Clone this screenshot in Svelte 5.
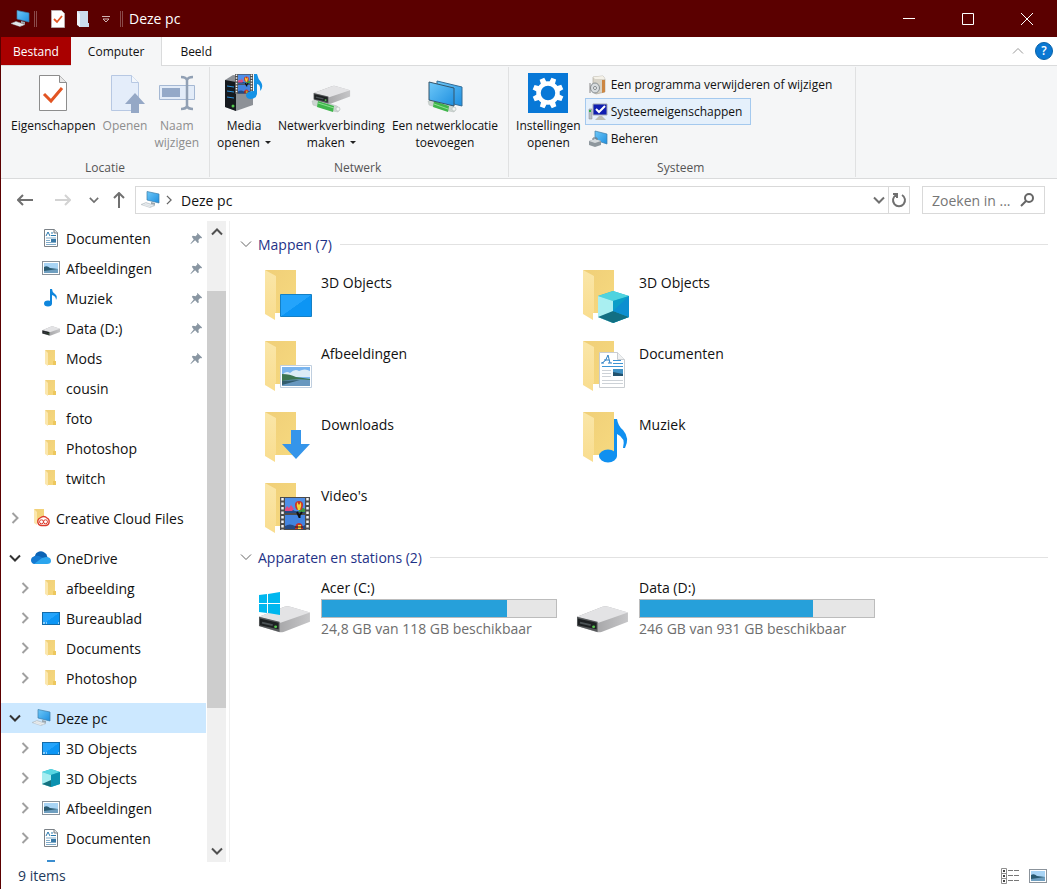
<script lang="ts">
  interface TreeItem {
    label: string;
    icon: string;
    level: number;
    pinned?: boolean;
    arrow?: 'open' | 'closed';
    selected?: boolean;
  }

  const sections: TreeItem[][] = [
    [
      { label: 'Documenten', icon: 'document', level: 1, pinned: true },
      { label: 'Afbeeldingen', icon: 'picture', level: 1, pinned: true },
      { label: 'Muziek', icon: 'music', level: 1, pinned: true },
      { label: 'Data (D:)', icon: 'drive', level: 1, pinned: true },
      { label: 'Mods', icon: 'folder', level: 1, pinned: true },
      { label: 'cousin', icon: 'folder', level: 1 },
      { label: 'foto', icon: 'folder', level: 1 },
      { label: 'Photoshop', icon: 'folder', level: 1 },
      { label: 'twitch', icon: 'folder', level: 1 }
    ],
    [{ label: 'Creative Cloud Files', icon: 'creative', level: 0, arrow: 'closed' }],
    [
      { label: 'OneDrive', icon: 'cloud', level: 0, arrow: 'open' },
      { label: 'afbeelding', icon: 'folder', level: 1, arrow: 'closed' },
      { label: 'Bureaublad', icon: 'desktop', level: 1, arrow: 'closed' },
      { label: 'Documents', icon: 'folder', level: 1, arrow: 'closed' },
      { label: 'Photoshop', icon: 'folder', level: 1, arrow: 'closed' }
    ],
    [
      { label: 'Deze pc', icon: 'pc', level: 0, arrow: 'open', selected: true },
      { label: '3D Objects', icon: 'desktop', level: 1, arrow: 'closed' },
      { label: '3D Objects', icon: 'cube', level: 1, arrow: 'closed' },
      { label: 'Afbeeldingen', icon: 'picture', level: 1, arrow: 'closed' },
      { label: 'Documenten', icon: 'document', level: 1, arrow: 'closed' }
    ]
  ];

  const folders = [
    { label: '3D Objects', overlay: 'desktop' },
    { label: '3D Objects', overlay: 'cube' },
    { label: 'Afbeeldingen', overlay: 'picture' },
    { label: 'Documenten', overlay: 'document' },
    { label: 'Downloads', overlay: 'download' },
    { label: 'Muziek', overlay: 'music' },
    { label: "Video's", overlay: 'video' }
  ];

  const drives = [
    { label: 'Acer (C:)', used: 79, info: '24,8 GB van 118 GB beschikbaar', system: true },
    { label: 'Data (D:)', used: 74, info: '246 GB van 931 GB beschikbaar', system: false }
  ];
</script>

{#snippet pc()}
  <svg class="i20" viewBox="0 0 20 20" aria-hidden="true">
    <path d="M7 1.500 19 4v9L7 10z" fill="url(#screen)" stroke="#3d7da8" stroke-width=".7" />
    <path d="m11 12 4 1v2l-4-1z" fill="#9aa6ae" />
    <path d="m1 14.500 5-2 9 3-5 2z" fill="#d7dde1" stroke="#a9b2b8" stroke-width=".5" />
    <path d="m3 14.500 7 2.300M5 13.500l8 2.500" stroke="#fff" stroke-width=".5" />
  </svg>
{/snippet}

{#snippet film()}
  <rect width="30" height="33" fill="#4c4c4c" />
  <path d="M2.500 1v32M27.500 1v32" stroke="#f4f4f4" stroke-width="2.500" stroke-dasharray="2.500 2" />
  <rect x="5" y="1" width="20" height="15" fill="#4f8fe8" />
  <rect x="5" y="18" width="20" height="14" fill="#4384e0" />
  <path d="M5 12q4-2 8 1t12-1v4H5zM5 29q5-3 10 0t10-1v4H5z" fill="#234a86" />
  <path d="m5 12 2-3 2 2 2-3 3 4-2 2H5z" fill="#e04a80" />
  <path d="M20 12q3-2 5 0v3h-7z" fill="#3f9a44" />
  <path d="M15 8a4 4 0 0 1 8 0q0 3-2 5h-4q-2-2-2-5z" fill="#c9302b" />
  <path d="M17 5q-1 4 1 8h2q2-4 1-8l-2 3z" fill="#f5d637" />
  <path d="m17 15 2 4 3-4M19.500 18v3" fill="none" stroke="#111" stroke-width="2" />
  <path d="M15 32q0-6 4-6t4 6z" fill="#c9302b" />
  <path d="M18 28h3v4h-3z" fill="#f5d637" />
  <path d="M15 30h8" stroke="#222" />
{/snippet}

{#snippet driveBody()}
  <path d="m1 14 26-12q3-1 6 0l20 7v11L26 32q-3 1-5 0L1 25z" fill="url(#metal)" />
  <path d="m1 14 26-12q3-1 6 0l20 7-30 12z" fill="#e3e3e5" />
  <path d="m1 14 21 6v12L1 25z" fill="#55585a" />
  <path d="m2 16 19 5v8L2 24z" fill="#1d2022" />
  <path d="m4 21 11 3" stroke="#4c5356" stroke-width="2" />
  <circle cx="18" cy="26" r="1.500" fill="#57c84d" />
{/snippet}

{#snippet treeIcon(name: string)}
  {#if name === 'pc'}
    {@render pc()}
  {:else}
    <svg class="i20" viewBox="0 0 20 20" aria-hidden="true">
      {#if name === 'folder'}
        <path d="M4 2h10v12h1v3H7z" fill="url(#back)" />
        <path d="m4 2 3 3v13l-3-2z" fill="#fbe7ae" />
        <path d="M12 13h3v4h-3z" fill="#edc75e" />
      {:else if name === 'creative'}
        <path d="M3 1h10v14H6z" fill="url(#back)" />
        <path d="m3 1 3 3v13l-3-2z" fill="#fbe7ae" />
        <path d="M10 17.500a4 4 0 0 1-1-7.500q4-3 7 0a4 4 0 0 1-1 7.500z" fill="#fff" stroke="#dc3b2c" stroke-width="1.300" />
        <circle cx="10.500" cy="13.800" r="2" fill="none" stroke="#dc3b2c" />
        <circle cx="14.500" cy="13.800" r="2" fill="none" stroke="#dc3b2c" />
      {:else if name === 'document'}
        <path d="M3.500 1.500h10l3 3v14h-13z" fill="#fff" stroke="#7b8187" />
        <path d="M13 1v4h4" fill="#dfe3e6" stroke="#7b8187" />
        <path d="m5 8 2-4 2 4M10 5h2M10 7.500h5" fill="none" stroke="#2878ad" />
        <path d="M5 10h10M5 12.500h4M5 14.500h10M5 16.500h10" stroke="#80abc9" />
        <path d="M10 11h5v3h-5z" fill="#3878a6" />
      {:else if name === 'picture'}
        <rect x="1.500" y="3.500" width="17" height="13" fill="#fff" stroke="#8b939b" />
        <path d="M3 5h14v10H3z" fill="#a8d4f5" />
        <path d="M3 9q3-2 6 1l8 1v4H3z" fill="#2a5a71" />
        <path d="m3 13 14-2v4H3z" fill="#6f9fc0" />
      {:else if name === 'music'}
        <ellipse cx="7" cy="15.500" rx="4" ry="3" fill="#0f86dc" />
        <path d="M9 1h2q0 3 3 5t1 6q0-4-4-5v9H9z" fill="#0f86dc" />
      {:else if name === 'drive'}
        <g transform="translate(1 8) scale(.34 .3)">{@render driveBody()}</g>
      {:else if name === 'cloud'}
        <path d="M4 15a4 4 0 0 1 0-7 6 6 0 0 1 10-3q2 1 2 3l3 7z" fill="#0b63b5" />
        <path d="M3 16q-3-1-3-4t4-4q3-1 6 1l4 2-8 5z" fill="#1479d1" />
        <path d="m3 16 8-6 4-1q5 0 5 4 0 3-4 3z" fill="#2ba5ee" />
      {:else if name === 'desktop'}
        <rect x="1.500" y="4.500" width="17" height="12" fill="url(#blue)" stroke="#126ba9" />
        <path d="M2 15h2m1 0h1m11 0h1" stroke="#fff" />
      {:else if name === 'cube'}
        <path d="m10 1 9 3v12l-9 3-9-3V4z" fill="#25aebd" />
        <path d="m1 4 9-3 9 3-9 3z" fill="#57d6e2" />
        <path d="m1 4 9 3v12l-9-3z" fill="#a5edf1" />
        <path d="m10 7 9-3v12l-9 3z" fill="#0b91b0" />
        <path d="m1 16 9-4v7z" fill="#14717f" />
      {/if}
    </svg>
  {/if}
{/snippet}

{#snippet chevron(dir: string)}
  <svg class="chevron {dir}" viewBox="0 0 12 12" aria-hidden="true">
    <path d="m1 3.500 5 5 5-5" />
  </svg>
{/snippet}

<svg class="defs" aria-hidden="true">
  <defs>
    <linearGradient id="screen" x2="1" y2="1">
      <stop offset="0" stop-color="#6ec8f8" />
      <stop offset="1" stop-color="#1e8fe0" />
    </linearGradient>
    <linearGradient id="blue" x2="1" y2="1">
      <stop offset=".5" stop-color="#24a4fb" />
      <stop offset=".51" stop-color="#0c95f4" />
    </linearGradient>
    <linearGradient id="back" x2="1" y2="1">
      <stop offset="0" stop-color="#f0cf78" />
      <stop offset="1" stop-color="#f6d97f" />
    </linearGradient>
    <linearGradient id="flap" y2="1" x2="0">
      <stop offset="0" stop-color="#fae6a8" />
      <stop offset="1" stop-color="#f9dd8f" />
    </linearGradient>
    <linearGradient id="metal" x2="1">
      <stop offset=".4" stop-color="#a8a8aa" />
      <stop offset="1" stop-color="#c6c6c8" />
    </linearGradient>
  </defs>
</svg>

<div class="window">
  <header class="titlebar">
    {@render pc()}
    <span class="separator"></span>
    <div class="quick-access">
      <button aria-label="Eigenschappen">
        <svg width="16" height="20" viewBox="0 0 16 20">
          <path d="M1.500 1.500h10l3 3v14h-13z" fill="#fff" stroke="#b9a8a8" />
          <path d="m4 10 3 3 5-6" fill="none" stroke="#e25422" stroke-width="1.800" />
        </svg>
      </button>
      <button aria-label="Nieuwe map">
        <svg width="16" height="20" viewBox="0 0 16 20">
          <path d="M2 2h11v12h1v4H4z" fill="#ccdcec" />
          <path d="m2 2 3 3v13l-3-2z" fill="#eef5fc" />
        </svg>
      </button>
      <button class="customize" aria-label="Werkbalk aanpassen">
        <svg width="8" height="8" viewBox="0 0 8 8">
          <path d="M0 1.500h8M1 4l3 3 3-3z" fill="none" stroke="#d0b4b4" />
        </svg>
      </button>
    </div>
    <span class="separator"></span>
    <h1>Deze pc</h1>
    <div class="caption-buttons">
      <button aria-label="Minimaliseren">
        <svg width="12" height="12" viewBox="0 0 12 12"><path d="M0 5.500h12" /></svg>
      </button>
      <button aria-label="Maximaliseren">
        <svg width="12" height="12" viewBox="0 0 12 12"><path d="M.5.5h11v11H.5z" /></svg>
      </button>
      <button aria-label="Sluiten">
        <svg width="12" height="12" viewBox="0 0 12 12"><path d="m0 0 12 12M12 0 0 12" /></svg>
      </button>
    </div>
  </header>

  <nav class="tabs">
    <button class="tab file">Bestand</button>
    <button class="tab active">Computer</button>
    <button class="tab">Beeld</button>
    <div class="tab-tools">
      <button class="plain light" aria-label="Lint minimaliseren">{@render chevron('up')}</button>
      <button class="help" aria-label="Help">?</button>
    </div>
  </nav>

  <section class="ribbon">
    <div class="group">
      <div class="group-items">
        <button class="big">
          <svg width="40" height="40" viewBox="0 0 40 40">
            <path d="M6.500 2.500h20l7 7v28h-27z" fill="#fff" stroke="#8d8d8d" />
            <path d="M26.500 2.500v7h7" fill="#e8e8e8" stroke="#8d8d8d" />
            <path d="m11 21 7 7 11-13" fill="none" stroke="#e25422" stroke-width="3" />
          </svg>
          <span>Eigenschappen</span>
        </button>
        <button class="big" disabled>
          <svg width="40" height="40" viewBox="0 0 40 40">
            <path d="M6.500 2.500h20l7 7v28h-27z" fill="#e4edfa" stroke="#b7c8e3" />
            <path d="M26.500 2.500v7h7" fill="#f3f7fc" stroke="#b7c8e3" />
            <path d="m30 20 10 11h-6v9h-8v-9h-6z" fill="#95a8c6" />
          </svg>
          <span>Openen</span>
        </button>
        <button class="big" disabled>
          <svg width="40" height="40" viewBox="0 0 40 40">
            <path d="M2.500 12.500h35v14h-35z" fill="#e3ecf8" stroke="#a5b8d3" />
            <path d="M5 15h18v9H5z" fill="#94a9c8" />
            <path d="M24 4q5 0 6 3 1-3 6-3M30 6v28m-6 2q5 0 6-3 1 3 6 3" fill="none" stroke="#91a0b4" stroke-width="2.500" />
          </svg>
          <span>Naam<br />wijzigen</span>
        </button>
      </div>
      <h2>Locatie</h2>
    </div>

    <div class="group">
      <div class="group-items">
        <button class="big">
          <svg width="40" height="40" viewBox="0 0 40 40">
            <path d="m1 7 8-5 20 2v28l-17 6L1 34z" fill="#8d9197" />
            <path d="m1 7 11 2v29L1 34z" fill="#15191e" />
            <path d="m3 13 7 1m-7 4 7 1m-7 5 7 1" stroke="#2b91dc" />
            <circle cx="9" cy="33" r="1.500" fill="#53c84b" />
            <g transform="translate(11 1) scale(.6)">{@render film()}</g>
            <path d="M30 1h3q1 5 4 8 3 5-1 9 1-6-3-7v10q-1 5-6 5t-5-4q1-4 8-4z" fill="#1492e6" />
          </svg>
          <span>Media<br />openen <i class="caret"></i></span>
        </button>
        <button class="big">
          <svg width="40" height="40" viewBox="0 0 40 40">
            <path d="m1 28 5-1 20 6 3 3-2 3-5-1-20-6z" fill="#ccd5d1" stroke="#b2bbb8" stroke-width=".5" />
            <path d="m7 28 16 5-1 6-16-5z" fill="#3fb64b" />
            <path d="m7 30 16 5" stroke="#8edf91" />
            <circle cx="27" cy="36" r="2" fill="#f1f5f3" stroke="#aab3b0" stroke-width=".5" />
            <g transform="translate(2 12) scale(.7 .58)">{@render driveBody()}</g>
          </svg>
          <span>Netwerkverbinding<br />maken <i class="caret"></i></span>
        </button>
        <button class="big">
          <svg width="40" height="40" viewBox="0 0 40 40">
            <path d="m12 8 25 6v19l-25-6z" fill="url(#screen)" stroke="#356d96" />
            <path d="m3 28 5-1 20 6 3 3-2 3-5-1-20-6z" fill="#ccd5d1" stroke="#b2bbb8" stroke-width=".5" />
            <path d="m9 28 15 5-1 6-15-5z" fill="#3fb64b" />
            <path d="m9 31 14 5" stroke="#8edf91" />
            <circle cx="29" cy="36" r="2" fill="#f1f5f3" stroke="#aab3b0" stroke-width=".5" />
            <path d="m4 9 25 6v18L4 27z" fill="url(#screen)" stroke="#34546a" />
          </svg>
          <span>Een netwerklocatie<br />toevoegen</span>
        </button>
      </div>
      <h2>Netwerk</h2>
    </div>

    <div class="group">
      <div class="group-items">
        <button class="big">
          <svg width="40" height="40" viewBox="0 0 40 40">
            <path d="M0 0h40v40H0z" fill="#0878d7" />
            <circle cx="20" cy="20" r="9.500" fill="none" stroke="#fff" stroke-width="4.500" />
            {#each [22, 67, 112, 157, 202, 247, 292, 337] as angle}
              <path d="M17.500 4.500h5l.5 5h-6z" fill="#fff" transform="rotate({angle} 20 20)" />
            {/each}
          </svg>
          <span>Instellingen<br />openen</span>
        </button>
        <div class="small-list">
          <button class="small">
            <svg class="i20" viewBox="0 0 20 20">
              <path d="m5 2 10-1 2 3v13l-9 2-3-2z" fill="#d7d3c8" stroke="#aaa597" stroke-width=".6" />
              <path d="m5 2 10-1 2 3H7z" fill="#f4f1e8" />
              <path d="M14 5h3v12l-3 1z" fill="#cc8642" />
              <ellipse cx="7" cy="13" rx="4.500" ry="5" fill="#d8dcde" stroke="#868d91" />
              <circle cx="7" cy="13" r="1.500" fill="#fff" stroke="#7f868a" />
              <path d="M2 8v10" stroke="#888" />
            </svg>
            Een programma verwijderen of wijzigen
          </button>
          <button class="small hover">
            <svg class="i20" viewBox="0 0 20 20">
              <path d="M1 7h3v10H1z" fill="#b9bfc3" stroke="#858b90" stroke-width=".5" />
              <path d="M1 8h2v2H1z" fill="#2fb344" />
              <path d="M5 2h14v11H5z" fill="#0f1eb1" stroke="#a7abb0" />
              <path d="m8 7 3 3 6-6" fill="none" stroke="#fff" stroke-width="2" />
              <path d="m11 14-4 4h11l-4-4z" fill="#bdbdb4" />
            </svg>
            Systeemeigenschappen
          </button>
          <button class="small">
            <svg class="i20" viewBox="0 0 20 20">
              <path d="m7 2 12 3v10L7 11z" fill="url(#screen)" stroke="#3d7da8" stroke-width=".7" />
              <path d="m1 12 6-2 6 2v4l-6 2-6-2z" fill="#8e979d" />
              <path d="m1 12 6-2 6 2-6 2z" fill="#d5dadd" />
              <path d="M5 11V9h4v2" fill="none" stroke="#707980" />
            </svg>
            Beheren
          </button>
        </div>
      </div>
      <h2>Systeem</h2>
    </div>
  </section>

  <div class="address-row">
    <button class="plain" aria-label="Vorige">
      <svg width="16" height="14" viewBox="0 0 16 14"><path d="M1 7h15M6 2 1 7l5 5" /></svg>
    </button>
    <button class="plain forward" aria-label="Volgende">
      <svg width="16" height="14" viewBox="0 0 16 14"><path d="M0 7h15M10 2l5 5-5 5" /></svg>
    </button>
    <button class="plain recent" aria-label="Recente locaties">{@render chevron('down')}</button>
    <button class="plain parent" aria-label="Omhoog">
      <svg width="14" height="16" viewBox="0 0 14 16"><path d="M7 1v15M2 6l5-5 5 5" /></svg>
    </button>
    <div class="address">
      {@render pc()}
      <span class="crumb-arrow">{@render chevron('right')}</span>
      <a href="#pc">Deze pc</a>
      <button class="plain" aria-label="Vorige locaties">{@render chevron('down')}</button>
      <button class="plain refresh" aria-label="Vernieuwen">
        <svg width="16" height="16" viewBox="0 0 16 16">
          <path d="M11 3a6 6 0 1 1-6 0M2 2h4v4" />
        </svg>
      </button>
    </div>
    <label class="search">
      <input type="text" placeholder="Zoeken in ..." aria-label="Zoeken in Deze pc" />
      <svg width="16" height="16" viewBox="0 0 16 16" aria-hidden="true">
        <circle cx="10" cy="6" r="4" /><path d="m7 9-5 5" />
      </svg>
    </label>
  </div>

  <div class="body">
    <aside class="sidebar">
      <div class="tree">
        {#each sections as section}
          <ul>
            {#each section as item}
              <li>
                <a href="#item" class="level{item.level}" class:selected={item.selected}>
                  <span class="toggle {item.arrow ?? ''}">
                    {#if item.arrow}
                      {@render chevron(item.arrow === 'open' ? 'down' : 'right')}
                    {/if}
                  </span>
                  {@render treeIcon(item.icon)}
                  <span class="name">{item.label}</span>
                  {#if item.pinned}
                    <svg class="pin" viewBox="0 0 14 14" aria-hidden="true">
                      <path d="m8 1 5 5-1 1-1-.5-2 2 .5 2.500-1 1-3-3L1 13l-.5-.5L4 8 2 5l1-1 3 .5 2-2L7.500 2z" />
                    </svg>
                  {/if}
                </a>
              </li>
            {/each}
          </ul>
        {/each}
        <span class="next-item"></span>
      </div>
      <div class="scrollbar">
        <button class="plain" aria-label="Omhoog schuiven">{@render chevron('up')}</button>
        <div class="track"><div class="thumb"></div></div>
        <button class="plain" aria-label="Omlaag schuiven">{@render chevron('down')}</button>
      </div>
    </aside>

    <main>
      <h2 class="heading">{@render chevron('down')}Mappen (7)</h2>
      <div class="tiles folders">
        {#each folders as folder}
          <a href="#folder" class="tile">
            <svg width="64" height="56" viewBox="0 0 64 56" aria-hidden="true">
              <path d="M12 2h31v43H22z" fill="url(#back)" />
              <path d="m12 2 11 6v36l-1 1v7l-10-6z" fill="url(#flap)" />
              {#if folder.overlay === 'desktop'}
                <path d="M27.500 26.500h31v22h-31z" fill="url(#blue)" stroke="#1580c5" />
              {:else if folder.overlay === 'cube'}
                <g transform="translate(-3 0)">
                  <path d="m30 28 15-5 16 5v21l-16 6-15-6z" fill="#29b8cb" />
                  <path d="m30 28 15-5 16 5-16 5z" fill="#4fd3df" />
                  <path d="m30 28 15 5v22l-15-6z" fill="#a9eff1" />
                  <path d="m45 33 16-5v21l-16 6z" fill="#0b9ec8" />
                  <path d="m30 49 15-6v12zM45 43l16 6-16 6z" fill="#126f82" />
                  <path d="m45 43 16-15v21z" fill="#0d8fd0" />
                </g>
              {:else if folder.overlay === 'picture'}
                <path d="M27.500 26.500h31v22h-31z" fill="#fff" stroke="#c0cfdf" />
                <path d="M29 28h28v19H29z" fill="#79b4ee" />
                <path d="M29 36q4-5 8-2 5-5 9-2 6-3 11 0v6H29z" fill="#dcebf6" />
                <path d="M29 35q8 0 14 3l14 2v2l-28 1z" fill="#3d7551" />
                <path d="M29 42q14-3 28-1v6H29z" fill="#6797bf" />
                <path d="m29 42 18-1-18 5z" fill="#315c6d" />
              {:else if folder.overlay === 'document'}
                <path d="M28.500 13.500h18l7 7v28h-25z" fill="#fff" stroke="#c9cdd1" />
                <path d="M46.500 13.500v7h7" fill="#f0f1f2" stroke="#c9cdd1" />
                <path d="M31 24q4-1 6-8l2 8m-6-3h5m-8 3h3m4 0h4" fill="none" stroke="#2b7fc4" />
                <path d="M42 21.500h8M42 24.500h10M31 27.500h21" stroke="#3c94d4" />
                <path d="M31 31.500h9m-9 3h9m-9 3h9m-9 4h21m-21 3h21" stroke="#cdd2d7" />
                <path d="M42 30h10v7H42z" fill="#4192c4" />
                <path d="m42 33 10 2v2H42z" fill="#24536e" />
              {:else if folder.overlay === 'download'}
                <path d="M38 20h10v14h9L43 49 29 34h9z" fill="#3595ea" />
              {:else if folder.overlay === 'music'}
                <ellipse cx="37" cy="46" rx="9" ry="6.500" fill="#1090f0" />
                <path d="M43 9h3q1 7 6 11 7 8 2 18h-2q3-10-6-14v22h-3z" fill="#1090f0" />
              {:else if folder.overlay === 'video'}
                <g transform="translate(27 16)">{@render film()}</g>
              {/if}
            </svg>
            <span class="name">{folder.label}</span>
          </a>
        {/each}
      </div>

      <h2 class="heading">{@render chevron('down')}Apparaten en stations (2)</h2>
      <div class="tiles drives">
        {#each drives as drive}
          <a href="#drive" class="tile">
            <svg width="64" height="64" viewBox="0 0 64 64" aria-hidden="true">
              <g transform="translate(5 29) scale(.98 .84)">{@render driveBody()}</g>
              {#if drive.system}
                <path d="m6 19 8-1v9H6zm9-1 12-2v11H15zM6 28h8v9l-8-1zm9 0h12v11l-12-2z" fill="#00b7ef" />
              {/if}
            </svg>
            <div class="drive-info">
              <span class="name">{drive.label}</span>
              <div class="usage"><div style="width: {drive.used}%"></div></div>
              <span class="free">{drive.info}</span>
            </div>
          </a>
        {/each}
      </div>
    </main>
  </div>

  <footer class="status">
    <span>9 items</span>
    <div class="views">
      <button aria-label="Details">
        <svg width="20" height="16" viewBox="0 0 20 16">
          <path d="M1.500.5h5v15h-5zM1.500 5.500h5m-5 5h5" fill="#fff" stroke="#8e8e8e" />
          <path d="M3 3h2M3 8h2M3 13h2" stroke="#444" stroke-width="2" />
          <path d="M8 2.500h5m1 0h5m-11 5h5m1 0h5m-11 5h5m1 0h5" stroke="#777" />
        </svg>
      </button>
      <button aria-label="Grote pictogrammen">{@render treeIcon('picture')}</button>
    </div>
  </footer>
</div>

<style>
  :global(body) {
    background: #fff;
  }

  .window {
    display: flex;
    flex-direction: column;
    box-sizing: border-box;
    height: 100vh;
    border-left: 1px solid #5b0000;
    background: #fff;
    color: #111;
    font-family: 'Open Sans', 'Noto Sans', sans-serif;
    font-size: 14px;
  }

  .defs {
    position: absolute;
    width: 0;
    height: 0;
  }

  button,
  input {
    padding: 0;
    border: 0;
    background: none;
    color: inherit;
    font: inherit;
  }

  a {
    color: inherit;
    text-decoration: none;
  }

  h1,
  h2 {
    margin: 0;
    font-weight: 400;
  }

  svg {
    display: block;
    flex: none;
  }

  .i20 {
    width: 20px;
    height: 20px;
  }

  .chevron {
    width: 12px;
    height: 12px;
    fill: none;
    stroke: #666;
    stroke-width: 1.5;
  }

  .chevron.up {
    transform: rotate(180deg);
  }

  .chevron.right {
    transform: rotate(-90deg);
  }

  .plain {
    display: grid;
    place-items: center;
    color: #707070;
  }

  .plain svg {
    fill: none;
    stroke: currentColor;
    stroke-width: 2;
  }

  .plain.light .chevron {
    color: #999;
    stroke-width: 1;
  }

  /* Title bar */
  .titlebar {
    display: flex;
    flex: none;
    align-items: center;
    height: 37px;
    padding-left: 9px;
    background: #5b0000;
    color: #fff;
  }

  .titlebar h1 {
    font-size: 14px;
  }

  .separator {
    width: 1px;
    height: 16px;
    margin: 0 6px 0 4px;
    border: 1px solid #8a4a4a;
    border-width: 0 1px;
  }

  .quick-access {
    display: flex;
    margin-left: 2px;
  }

  .quick-access button {
    display: grid;
    place-items: center;
    width: 25px;
    height: 24px;
  }

  .quick-access .customize {
    width: 21px;
  }

  .caption-buttons {
    display: flex;
    align-self: stretch;
    margin-left: auto;
    padding-right: 1px;
  }

  .caption-buttons button {
    display: grid;
    place-items: center;
    width: 59px;
  }

  .caption-buttons path {
    fill: none;
    stroke: #fff;
  }

  /* Tabs */
  .tabs {
    display: flex;
    flex: none;
    height: 28px;
    font-size: 12px;
  }

  .tab {
    padding: 0 18px;
  }

  .tab.file {
    padding: 0 12px;
    background: #a90000;
    color: #fff;
  }

  .tab.active {
    z-index: 1;
    margin-bottom: -1px;
    padding: 0 17px 1px;
    border-right: 1px solid #dadbdc;
    background: #f5f6f7;
  }

  .tab-tools {
    display: flex;
    align-items: center;
    gap: 11px;
    margin-left: auto;
    padding-right: 4px;
  }

  .help {
    width: 18px;
    height: 18px;
    border: 1px solid #0862a8;
    border-radius: 50%;
    background: #0a78d3;
    color: #fff;
    font-weight: 600;
    line-height: 16px;
  }

  /* Ribbon */
  .ribbon {
    display: flex;
    flex: none;
    box-sizing: border-box;
    height: 114px;
    padding: 1px 0;
    border: 1px solid #dadbdc;
    border-width: 1px 0;
    background: #f5f6f7;
    font-size: 12px;
    line-height: 17px;
  }

  .group {
    display: flex;
    flex-direction: column;
    justify-content: space-between;
    padding: 0 9px 1px 6px;
    border-right: 1px solid #e0e1e2;
  }

  .group h2 {
    color: #555;
    font-size: 12px;
    text-align: center;
  }

  .group-items {
    display: flex;
    gap: 5px;
    padding-top: 6px;
  }

  .group:first-child {
    padding-left: 9px;
  }

  .big {
    display: flex;
    flex-direction: column;
    align-items: center;
    gap: 4px;
    padding: 0 1px;
  }

  .big:disabled {
    color: #8d8d8d;
  }

  .caret {
    display: inline-block;
    margin: 0 0 3px 2px;
    border: 3px solid transparent;
    border-top-color: #222;
    border-bottom: 0;
  }

  .small-list {
    margin: -2px 5px 0 -2px;
  }

  .small {
    display: flex;
    align-items: center;
    gap: 3px;
    box-sizing: border-box;
    height: 27px;
    padding: 0 8px 0 2px;
    border: 1px solid transparent;
  }

  .small.hover {
    border-color: #a4c9ee;
    background: #e5f0fb;
  }

  /* Address bar */
  .address-row {
    display: flex;
    flex: none;
    align-items: center;
    box-sizing: border-box;
    height: 42px;
    padding: 0 12px 0 15px;
  }

  .address-row > .plain {
    width: 18px;
    margin-right: 20px;
  }

  .address-row > .forward {
    margin-right: 15px;
    color: #d3d3d3;
  }

  .address-row > .recent {
    width: 14px;
    margin-right: 9px;
  }

  .address-row > .parent {
    margin-right: 7px;
  }

  .recent .chevron {
    width: 10px;
    height: 10px;
  }

  .address {
    display: flex;
    flex: 1;
    align-items: center;
    box-sizing: border-box;
    height: 28px;
    padding-left: 4px;
    border: 1px solid #d9d9d9;
  }

  .address a {
    flex: 1;
  }

  .address .plain {
    width: 18px;
    height: 100%;
  }

  .address .refresh {
    width: 21px;
    border-left: 1px solid #d9d9d9;
  }

  .crumb-arrow {
    margin: 0 7px 0 4px;
  }

  .crumb-arrow .chevron {
    width: 10px;
  }

  .search {
    display: flex;
    align-items: center;
    box-sizing: border-box;
    width: 123px;
    height: 28px;
    margin-left: 12px;
    padding: 0 9px;
    border: 1px solid #d9d9d9;
  }

  .search input {
    flex: 1;
    min-width: 0;
    outline: 0;
  }

  .search input::placeholder {
    color: #767676;
    opacity: 1;
  }

  .search svg {
    fill: none;
    stroke: #666;
    stroke-width: 2;
  }

  /* Navigation tree */
  .body {
    display: flex;
    flex: 1;
    min-height: 0;
  }

  .sidebar {
    display: flex;
    flex: none;
    width: 228px;
    border-right: 1px solid #f0f0f0;
  }

  .tree {
    flex: 1;
    overflow: hidden;
    padding-top: 2px;
  }

  ul {
    margin: 0 0 10px;
    padding: 0;
    list-style: none;
  }

  ul:last-of-type {
    margin-bottom: 0;
  }

  .tree a {
    display: flex;
    align-items: center;
    height: 30px;
    padding: 0 3px 0 8px;
  }

  .tree .level1 {
    padding-left: 18px;
  }

  .tree .selected {
    background: #cce8ff;
  }

  .toggle {
    width: 12px;
    margin-right: 10px;
  }

  .tree .name {
    flex: 1;
    margin-left: 5px;
    white-space: nowrap;
  }

  .toggle.closed .chevron {
    stroke: #a0a0a0;
    stroke-width: 2;
  }

  .toggle.open .chevron {
    stroke: #333;
    stroke-width: 2;
  }

  .pin {
    width: 13px;
    height: 13px;
    fill: #8996a2;
  }

  .next-item {
    display: block;
    width: 8px;
    height: 2px;
    margin: 7px 0 0 46px;
    background: #3b8ed0;
  }

  .scrollbar {
    display: flex;
    flex-direction: column;
    width: 19px;
    margin: 0 3px 0 1px;
    background: #f0f0f0;
  }

  .scrollbar .plain {
    height: 22px;
    color: #505050;
  }

  .track {
    flex: 1;
    padding-top: 48px;
  }

  .thumb {
    height: 76%;
    background: #cdcdcd;
  }

  /* Contents */
  main {
    flex: 1;
    min-width: 0;
    padding: 11px 9px 0 10px;
  }

  .heading {
    display: flex;
    align-items: center;
    gap: 6px;
    height: 24px;
    color: #1e3287;
    font-size: 14px;
  }

  .heading::after {
    flex: 1;
    height: 1px;
    margin-left: 2px;
    background: #e2e2e2;
    content: '';
  }

  .heading .chevron {
    stroke-width: 1;
  }

  .tiles {
    display: grid;
    grid-template-columns: repeat(auto-fill, 318px);
    padding-left: 13px;
  }

  .folders {
    margin: 4px 0 1px;
  }

  .drives {
    padding-top: 9px;
  }

  .tile {
    display: flex;
    gap: 4px;
  }

  .folders .tile {
    box-sizing: border-box;
    height: 71px;
    padding-top: 8px;
  }

  .folders .name {
    margin-top: 5px;
  }

  .drives svg {
    margin-top: -2px;
  }

  .tile .name,
  .free {
    line-height: 20px;
  }

  .drive-info {
    display: flex;
    flex-direction: column;
    width: 236px;
  }

  .usage {
    box-sizing: border-box;
    height: 19px;
    margin: 1px 0;
    border: 1px solid #bcbcbc;
    background: #e6e6e6;
  }

  .usage div {
    height: 100%;
    background: #26a0da;
  }

  .free {
    color: #6d6d6d;
  }

  /* Status bar */
  .status {
    display: flex;
    flex: none;
    align-items: center;
    justify-content: space-between;
    height: 27px;
    padding: 0 9px 0 17px;
    color: #1e395b;
  }

  .views {
    display: flex;
    gap: 8px;
  }
</style>
